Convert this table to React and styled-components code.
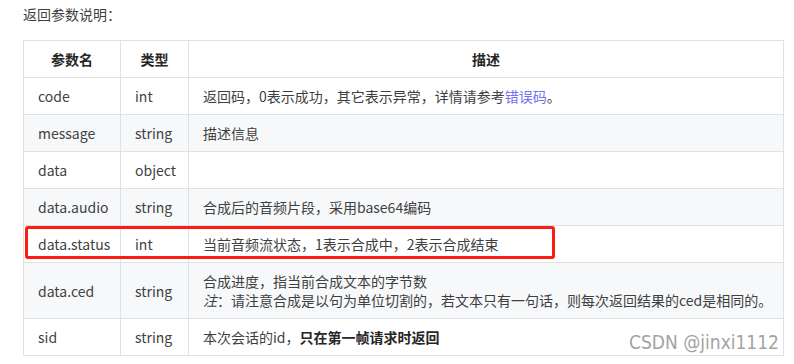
import styled, { createGlobalStyle } from "styled-components";

const GlobalStyle = createGlobalStyle`
  html, body {
    margin: 0;
    padding: 0;
    background: #fff;
  }
  body {
    font-family: "Noto Sans CJK SC", "Noto Sans", sans-serif;
    font-size: 14px;
    color: #3f3f3f;
  }
`;

const Page = styled.div`
  position: relative;
  width: 794px;
  height: 364px;
  padding: 5px 0 0 23px;
  box-sizing: border-box;
`;

const Title = styled.p`
  margin: 0 0 16px;
  line-height: 19px;
`;

const Table = styled.table`
  width: 761px;
  border-collapse: collapse;
  table-layout: fixed;
  line-height: 19px;
`;

const Head = styled.th`
  width: ${(props) => props.width || "auto"};
  height: 36px;
  padding: 0;
  border: 1px solid #dfe2e5;
  font-weight: bold;
  color: #262626;
  text-align: center;
`;

const Row = styled.tr`
  background: ${(props) => (props.striped ? "#f6f8fa" : "#fff")};
`;

const Cell = styled.td`
  padding: 9px 14px 8px;
  border: 1px solid #dfe2e5;
  vertical-align: middle;
  white-space: nowrap;
`;

const Link = styled.a`
  color: #7070f2;
  text-decoration: none;
`;

const Note = styled.em`
  font-style: italic;
`;

const Strong = styled.strong`
  color: #262626;
`;

const Highlight = styled.div`
  position: absolute;
  left: 25px;
  top: 226px;
  width: 530px;
  height: 33px;
  border: 3px solid #fa1d12;
  border-radius: 3px;
  box-sizing: border-box;
  pointer-events: none;
`;

const Watermark = styled.span`
  position: absolute;
  right: 15px;
  top: 331px;
  font-family: "DejaVu Sans Condensed", "DejaVu Sans", sans-serif;
  font-size: 19px;
  line-height: 22px;
  color: #a3a3a3;
`;

const rows = [
  { name: "code", type: "int", desc: <>返回码，0表示成功，其它表示异常，详情请参考<Link href="#">错误码</Link>。</> },
  { name: "message", type: "string", desc: "描述信息" },
  { name: "data", type: "object", desc: "" },
  { name: "data.audio", type: "string", desc: "合成后的音频片段，采用base64编码" },
  { name: "data.status", type: "int", desc: "当前音频流状态，1表示合成中，2表示合成结束" },
  {
    name: "data.ced",
    type: "string",
    desc: (
      <>
        合成进度，指当前合成文本的字节数
        <br />
        <Note>注</Note>：请注意合成是以句为单位切割的，若文本只有一句话，则每次返回结果的ced是相同的。
      </>
    ),
  },
  { name: "sid", type: "string", desc: <>本次会话的id，<Strong>只在第一帧请求时返回</Strong></> },
];

function App() {
  return (
    <>
      <GlobalStyle />
      <Page>
        <Title>返回参数说明：</Title>
        <Table>
          <thead>
            <tr>
              <Head width="96px">参数名</Head>
              <Head width="67px">类型</Head>
              <Head>描述</Head>
            </tr>
          </thead>
          <tbody>
            {rows.map((row, idx) => (
              <Row key={row.name} striped={idx % 2 === 1}>
                <Cell>{row.name}</Cell>
                <Cell>{row.type}</Cell>
                <Cell>{row.desc}</Cell>
              </Row>
            ))}
          </tbody>
        </Table>
        <Highlight />
        <Watermark>CSDN @jinxi1112</Watermark>
      </Page>
    </>
  );
}

export default App;
